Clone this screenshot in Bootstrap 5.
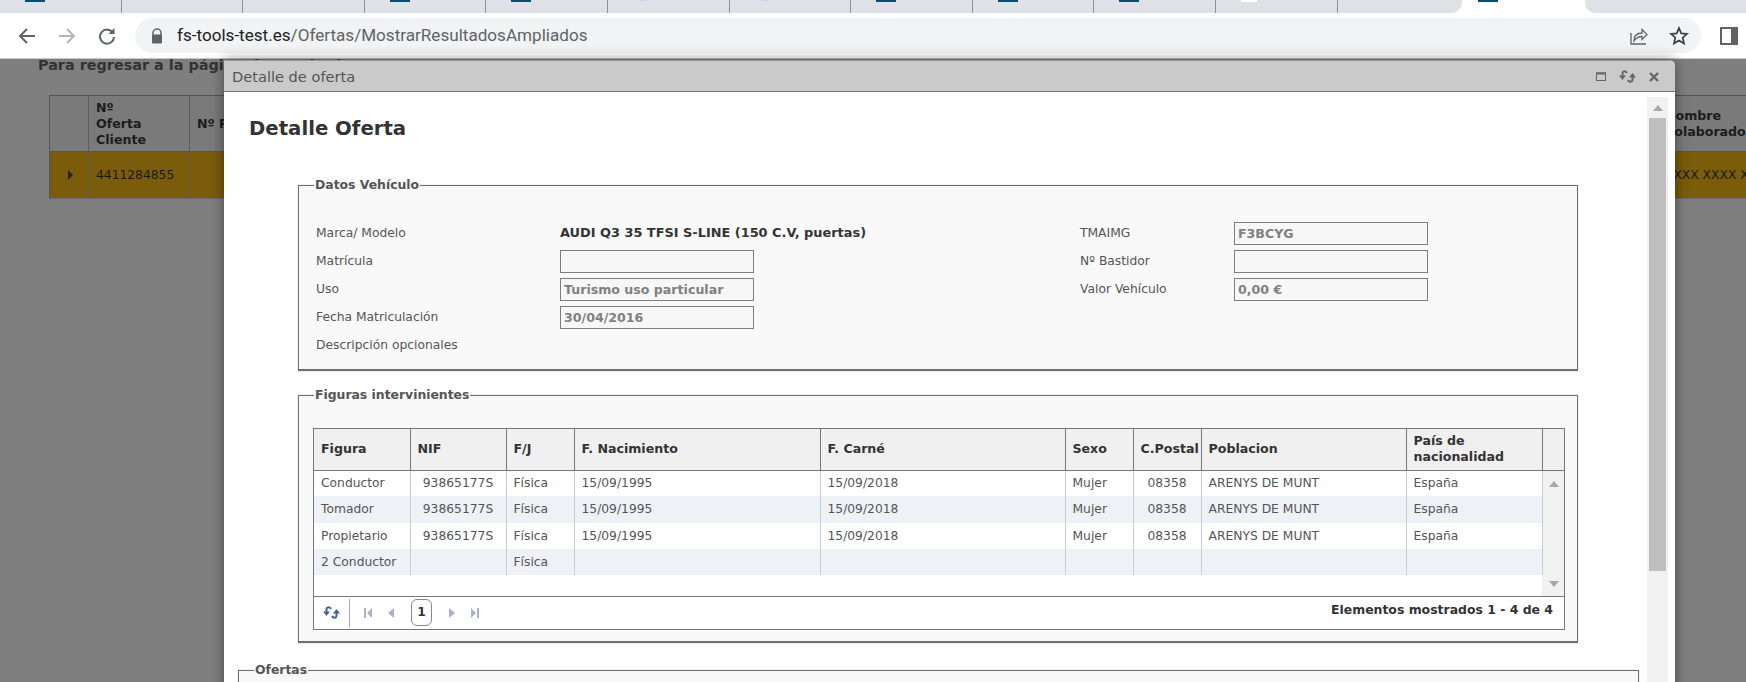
<!DOCTYPE html>
<html lang="es">
<head>
<meta charset="UTF-8">
<title>Detalle de oferta</title>
<link href="https://cdn.jsdelivr.net/npm/bootstrap@5.3.3/dist/css/bootstrap.min.css" rel="stylesheet">
<script src="https://cdn.jsdelivr.net/npm/bootstrap@5.3.3/dist/js/bootstrap.bundle.min.js"></script>
<style>
    html, body { height: 682px; overflow: hidden; }
    body { font-family: "DejaVu Sans", sans-serif; font-size: 12.3px; color: #555; background: #7f7f7f; }

    /* browser chrome */
    .tabstrip { height: 13px; background: #fff; }
    .tabs-left { width: 1462px; background: #dee1e6; border-bottom-right-radius: 10px; }
    .tabs-right { background: #dee1e6; border-bottom-left-radius: 10px; margin-left: 87px; }
    .tab-cell { width: 121.6px; height: 13px; border-right: 1px solid #8f9296; padding-left: 25px; }
    .tab-cell:last-child { border-right: 0; }
    .fav { width: 20px; height: 2px; background: #00507a; }
    .fav-faint { background: #c9cdf0; width: 6px; height: 1px; margin-left: 7px; }
    .fav-white { background: #fff; width: 16px; }
    .active-fav { margin-left: 16px; }
    .toolbar { height: 45px; background: #fff; padding: 5px 0 5px 7px; }
    .tool-btn { width: 40px; height: 35px; }
    .omnibox { width: 1566px; height: 35px; background: #f1f3f4; border-radius: 18px; padding: 0 12px 0 16px; margin-left: 8px; }
    .url-text { font-family: Roboto, sans-serif; font-size: 17.1px; color: #5f6368; margin-left: 14px; }
    .url-host { color: #202124; }
    .omni-icons { gap: 20px; }
    .panel-icon { margin-left: 19px; }
    .chrome-line { height: 1px; background: #c8c8c8; }

    /* page behind the dialog */
    .under-page { height: 623px; background: #7f7f7f; }
    .under-note { padding: 0 0 0 38px; height: 36px; font-weight: 700; font-size: 14.4px; line-height: 12px; color: #333; white-space: nowrap; }
    .under-table { margin-left: 49px; width: 1760px; border-left: 1px solid #555; }
    .under-head { height: 57px; background: #7a7a7a; border-top: 1px solid #555; border-bottom: 1px solid #555; font-weight: 700; font-size: 12.6px; color: #1c1c1c; line-height: 16px; }
    .under-row { height: 47px; background: #7a5c0a; color: #1a1a0a; border-bottom: 1px solid #6b6b6b; }
    .u-arrow { width: 39px; border-right: 1px solid #5d5d5d; }
    .u-num { width: 101px; border-right: 1px solid #5d5d5d; padding-left: 7px; }
    .u-gap { width: 1467px; padding-left: 7px; }
    .under-tri { width: 0; height: 0; border-left: 5px solid #222; border-top: 5px solid transparent; border-bottom: 5px solid transparent; margin-left: 18px; }

    /* dialog */
    .dlg { position: absolute; left: 224px; top: 60px; width: 1451px; height: 640px; background: #fff; border-top: 1px solid #9a9a9a; border-top-right-radius: 5px; box-shadow: 0 0 14px rgba(0, 0, 0, .45); }
    .dlg-title { height: 31px; background: #cacaca; border-bottom: 1px solid #777; padding: 1px 16px 0 8px; font-size: 14.6px; color: #555; border-top-right-radius: 5px; }
    .title-tools { gap: 13px; }
    .dlg-scroller { width: 21px; left: 1423px; background: #f1f1f1; height: 600px; position: absolute; top: 36px; }
    .scroll-up { height: 21px; }
    .scroll-thumb { width: 17px; height: 453px; margin-left: 2px; background: #bfbfbf; }
    .tri-up { width: 0; height: 0; border-left: 5px solid transparent; border-right: 5px solid transparent; border-bottom: 6px solid #a6a6a6; }
    .tri-down { width: 0; height: 0; border-left: 5px solid transparent; border-right: 5px solid transparent; border-top: 6px solid #a6a6a6; }
    .dlg-heading { font-size: 19.7px; font-weight: 700; color: #333; margin: 0; padding: 23px 0 0 25px; line-height: 28px; height: 86px; }

    fieldset.box { background: #f9f9f9; border: 1px solid #6f6f6f; border-bottom-width: 2px; box-shadow: 0 0 1px #aaa; margin: 0 0 0 74px; width: 1280px; padding: 0 17px; }
    fieldset.box legend { float: none; width: auto; font-size: 12.4px; font-weight: 700; color: #555; margin: 0 0 0 -2px; padding: 0 1px; line-height: 14px; }
    .box-vehicle { height: 193px; margin-bottom: 17px !important; }
    .box-figures { height: 255px; margin-bottom: 20px !important; }
    .box-offers { width: 1401px !important; margin-left: 14px !important; height: 60px; }
    .v-rows { padding-top: 27px; }
    .v-row { height: 28px; }
    .v-label { width: 244px; }
    .v-label-r { width: 154px; }
    .v-left { width: 764px; }
    .v-strong { font-weight: 700; font-size: 12.9px; color: #333; }
    .v-box { width: 194px; height: 23px; border: 1px solid #7d7d7d; background: #f7f7f7; font-weight: 700; font-size: 12.6px; color: #808080; padding-left: 3px; line-height: 21px; }

    /* grid */
    .grid-wrap { width: 1252px; margin: 26px 0 0 -3px; border: 1px solid #777; background: #fff; }
    .grid-tbl { table-layout: fixed; width: 1250px; border-collapse: collapse; }
    .grid-tbl th { height: 41px; background: #f0f0f0; color: #333; font-weight: 700; font-size: 12.6px; padding: 0 0 0 7px; border-right: 1px solid #777; border-bottom: 1px solid #777; line-height: 16px; white-space: nowrap; vertical-align: middle; }
    .grid-tbl th:last-child { border-right: 0; }
    .grid-tbl td { height: 26px; padding: 0 0 0 7px; border-right: 1px solid #c9ced3; white-space: nowrap; color: #555; }
    .grid-tbl tr.stripe td { background: #eef1f6; }
    .grid-tbl tr.tail td { height: 20px; border-right: 0; }
    .grid-tbl td.mid { text-align: center; padding: 0; }
    .grid-tbl td.side { background: #f1f1f1 !important; border: 0; padding: 0; vertical-align: top; }
    .side-in { height: 125px; padding: 10px 0 9px 6px; }
    .cw-fig { width: 96px; } .cw-nif { width: 96px; } .cw-fj { width: 68px; } .cw-date { width: 246px; } .cw-date2 { width: 245px; }
    .cw-sex { width: 68px; } .cw-cp { width: 68px; } .cw-pob { width: 205px; } .cw-pais { width: 136px; } .cw-side { width: 22px; }
    .grid-foot { height: 33px; border-top: 1px solid #777; padding-right: 11px; }
    .foot-refresh { width: 36px; height: 28px; border-right: 1px solid #9fb0c8; margin-right: 14px; padding-left: 9px; }
    .page-one { width: 21px; height: 27px; border: 1px solid #888; border-radius: 6px; font-weight: 700; color: #333; margin: 0 17px 0 17px; }
    .pg-gap { margin-right: 16px; }
    .foot-count { font-weight: 700; font-size: 12.45px; color: #333; padding-bottom: 5px; }
</style>
</head>
<body>

<!-- Browser tabs -->
<div class="tabstrip d-flex">
    <div class="tabs-left d-flex">
        <div class="tab-cell"><div class="fav"></div></div>
        <div class="tab-cell"></div>
        <div class="tab-cell"></div>
        <div class="tab-cell"><div class="fav"></div></div>
        <div class="tab-cell"><div class="fav"></div></div>
        <div class="tab-cell"><div class="fav fav-faint"></div></div>
        <div class="tab-cell"><div class="fav fav-faint"></div></div>
        <div class="tab-cell"><div class="fav"></div></div>
        <div class="tab-cell"><div class="fav"></div></div>
        <div class="tab-cell"><div class="fav"></div></div>
        <div class="tab-cell"><div class="fav fav-white"></div></div>
        <div class="tab-cell"></div>
    </div>
    <div class="active-fav fav"></div>
    <div class="tabs-right flex-grow-1"></div>
</div>

<!-- Browser toolbar -->
<div class="toolbar d-flex align-items-center">
    <div class="tool-btn d-flex align-items-center justify-content-center">
        <svg width="18" height="18" viewBox="0 0 18 18" fill="none" stroke="#5f6368" stroke-width="2"><path d="M17 9H2M9 2 2 9l7 7"/></svg>
    </div>
    <div class="tool-btn d-flex align-items-center justify-content-center">
        <svg width="18" height="18" viewBox="0 0 18 18" fill="none" stroke="#b5b7ba" stroke-width="2"><path d="M1 9h15M9 2l7 7-7 7"/></svg>
    </div>
    <div class="tool-btn d-flex align-items-center justify-content-center">
        <svg width="18" height="18" viewBox="0 0 18 18" fill="none" stroke="#5f6368" stroke-width="2"><path d="M15 6a7 7 0 1 0 1 4"/><path d="M16.500 1v6h-6" fill="#5f6368" stroke="none"/></svg>
    </div>
    <div class="omnibox d-flex align-items-center">
        <svg width="12" height="16" viewBox="0 0 12 16"><path d="M2 7V5a4 4 0 0 1 8 0v2" fill="none" stroke="#5f6368" stroke-width="1.500"/><rect x="1" y="6.500" width="10" height="9" rx="1" fill="#5f6368"/></svg>
        <span class="url-text"><span class="url-host">fs-tools-test.es</span>/Ofertas/MostrarResultadosAmpliados</span>
        <div class="ms-auto d-flex align-items-center omni-icons">
            <svg width="20" height="20" viewBox="0 0 20 20" fill="none" stroke="#5f6368" stroke-width="1.300"><path d="M2 7v11h15"/><path d="M5 15c0-5 3-8 8-8V3.500l5 5-5 5V10.500c-4 0-6 1.500-8 4.500z"/></svg>
            <svg width="20" height="20" viewBox="0 0 20 20" fill="none" stroke="#3c4043" stroke-width="1.700"><path d="m10 2 2.300 5.400 5.700.5-4.300 3.800 1.300 5.700-5-3-5 3 1.300-5.700L2 7.900l5.700-.5z"/></svg>
        </div>
    </div>
    <div class="panel-icon">
        <svg width="18" height="18" viewBox="0 0 18 18" fill="none" stroke="#5f6368" stroke-width="2"><rect x="1" y="1" width="16" height="16"/><rect x="12" y="1" width="5" height="16" fill="#5f6368"/></svg>
    </div>
</div>
<div class="chrome-line"></div>

<!-- Page behind the dialog -->
<div class="under-page overflow-hidden">
    <div class="under-note">Para regresar a la página de resultados</div>
    <div class="under-table">
        <div class="under-head d-flex">
            <div class="u-arrow"></div>
            <div class="u-num d-flex align-items-center">Nº<br>Oferta<br>Cliente</div>
            <div class="u-gap d-flex align-items-center">Nº P</div>
            <div class="d-flex align-items-center ps-2">Nombre<br>Colaborador</div>
        </div>
        <div class="under-row d-flex align-items-center">
            <div class="u-arrow h-100 d-flex align-items-center"><div class="under-tri"></div></div>
            <div class="u-num h-100 d-flex align-items-center">4411284855</div>
            <div class="u-gap"></div>
            <div class="ps-2 text-nowrap">XXXX XXXX XXXX</div>
        </div>
    </div>
</div>

<!-- Dialog -->
<div class="dlg overflow-hidden">
    <div class="dlg-title d-flex align-items-center">
        <span>Detalle de oferta</span>
        <div class="ms-auto d-flex align-items-center title-tools">
            <svg width="10" height="9" viewBox="0 0 10 9" fill="none" stroke="#666"><rect x=".5" y="1" width="9" height="7.500" stroke-width="1"/><path d="M0 1.500h10" stroke-width="2"/></svg>
            <svg width="17" height="13" viewBox="0 0 17 13"><path d="M8 3C7 .8 4 .5 3.500 3v3M9 10c1 2.200 4 2.500 4.500 0V7" fill="none" stroke="#666" stroke-width="2"/><path d="M0 5.500h7L3.500 10zM10 7.500h7L13.500 3z" fill="#666"/></svg>
            <svg width="10" height="10" viewBox="0 0 10 10" stroke="#666" stroke-width="2.400"><path d="M1 1l8 8M9 1l-8 8"/></svg>
        </div>
    </div>

    <div class="dlg-scroller">
        <div class="scroll-up d-flex align-items-center justify-content-center"><div class="tri-up"></div></div>
        <div class="scroll-thumb"></div>
    </div>

    <h1 class="dlg-heading">Detalle Oferta</h1>

    <fieldset class="box box-vehicle">
        <legend>Datos Vehículo</legend>
        <div class="v-rows d-flex">
            <div class="v-left">
                <div class="v-row d-flex align-items-center"><div class="v-label">Marca/ Modelo</div><div class="v-strong">AUDI Q3 35 TFSI S-LINE (150 C.V, puertas)</div></div>
                <div class="v-row d-flex align-items-center"><div class="v-label">Matrícula</div><div class="v-box"></div></div>
                <div class="v-row d-flex align-items-center"><div class="v-label">Uso</div><div class="v-box">Turismo uso particular</div></div>
                <div class="v-row d-flex align-items-center"><div class="v-label">Fecha Matriculación</div><div class="v-box">30/04/2016</div></div>
                <div class="v-row d-flex align-items-center"><div class="v-label">Descripción opcionales</div></div>
            </div>
            <div>
                <div class="v-row d-flex align-items-center"><div class="v-label-r">TMAIMG</div><div class="v-box">F3BCYG</div></div>
                <div class="v-row d-flex align-items-center"><div class="v-label-r">Nº Bastidor</div><div class="v-box"></div></div>
                <div class="v-row d-flex align-items-center"><div class="v-label-r">Valor Vehículo</div><div class="v-box">0,00 €</div></div>
            </div>
        </div>
    </fieldset>

    <fieldset class="box box-figures">
        <legend>Figuras intervinientes</legend>
        <div class="grid-wrap">
            <table class="grid-tbl">
                <thead>
                    <tr>
                        <th class="cw-fig">Figura</th>
                        <th class="cw-nif">NIF</th>
                        <th class="cw-fj">F/J</th>
                        <th class="cw-date">F. Nacimiento</th>
                        <th class="cw-date2">F. Carné</th>
                        <th class="cw-sex">Sexo</th>
                        <th class="cw-cp">C.Postal</th>
                        <th class="cw-pob">Poblacion</th>
                        <th class="cw-pais">País de<br>nacionalidad</th>
                        <th class="cw-side"></th>
                    </tr>
                </thead>
                <tbody>
                    <tr>
                        <td>Conductor</td><td class="mid">93865177S</td><td>Física</td><td>15/09/1995</td><td>15/09/2018</td><td>Mujer</td><td class="mid">08358</td><td>ARENYS DE MUNT</td><td>España</td>
                        <td class="side" rowspan="5"><div class="side-in d-flex flex-column justify-content-between"><div class="tri-up"></div><div class="tri-down"></div></div></td>
                    </tr>
                    <tr class="stripe">
                        <td>Tomador</td><td class="mid">93865177S</td><td>Física</td><td>15/09/1995</td><td>15/09/2018</td><td>Mujer</td><td class="mid">08358</td><td>ARENYS DE MUNT</td><td>España</td>
                    </tr>
                    <tr>
                        <td>Propietario</td><td class="mid">93865177S</td><td>Física</td><td>15/09/1995</td><td>15/09/2018</td><td>Mujer</td><td class="mid">08358</td><td>ARENYS DE MUNT</td><td>España</td>
                    </tr>
                    <tr class="stripe">
                        <td>2 Conductor</td><td></td><td>Física</td><td></td><td></td><td></td><td></td><td></td><td></td>
                    </tr>
                    <tr class="tail"><td colspan="9"></td></tr>
                </tbody>
            </table>
            <div class="grid-foot d-flex align-items-center">
                <div class="foot-refresh d-flex align-items-center">
                    <svg width="17" height="13" viewBox="0 0 17 13"><path d="M8 3C7 .8 4 .5 3.500 3v3M9 10c1 2.200 4 2.500 4.500 0V7" fill="none" stroke="#4a5f9e" stroke-width="2"/><path d="M0 5.500h7L3.500 10zM10 7.500h7L13.500 3z" fill="#4a5f9e"/></svg>
                </div>
                <svg class="pg-gap" width="8" height="10" viewBox="0 0 8 10" fill="#a9b2cf"><path d="M0 0h2v10H0zM8 0v10L3 5z"/></svg>
                <svg width="6" height="10" viewBox="0 0 6 10" fill="#a9b2cf"><path d="M6 0v10L0 5z"/></svg>
                <div class="page-one d-flex align-items-center justify-content-center">1</div>
                <svg class="pg-gap" width="6" height="10" viewBox="0 0 6 10" fill="#a9b2cf"><path d="M0 0v10l6-5z"/></svg>
                <svg width="8" height="10" viewBox="0 0 8 10" fill="#a9b2cf"><path d="M0 0v10l5-5zM6 0h2v10H6z"/></svg>
                <div class="ms-auto foot-count">Elementos mostrados 1 - 4 de 4</div>
            </div>
        </div>
    </fieldset>

    <fieldset class="box box-offers">
        <legend>Ofertas</legend>
    </fieldset>
</div>

</body>
</html>
